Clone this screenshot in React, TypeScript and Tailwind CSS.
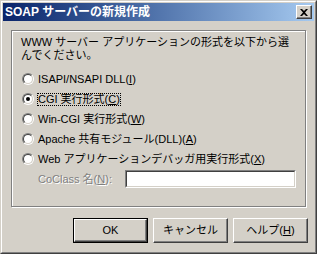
import type { ReactNode } from "react";

const font = { fontFamily: '"Liberation Sans", "Noto Sans CJK JP", sans-serif' };

function Radio({ checked }: { checked?: boolean }) {
  return (
    <div className="w-3 h-3 rounded-full border border-t-[#808080] border-l-[#808080] border-b-white border-r-white shrink-0">
      <div className="w-full h-full rounded-full border border-t-[#404040] border-l-[#404040] border-b-[#d4d0c8] border-r-[#d4d0c8] bg-white flex items-center justify-center">
        {checked && <div className="w-1 h-1 rounded-full bg-black" />}
      </div>
    </div>
  );
}

function Option({ checked, focused, children }: { checked?: boolean; focused?: boolean; children: ReactNode }) {
  return (
    <div className="h-5 flex items-center ml-[1px]">
      <Radio checked={checked} />
      <span
        className={
          focused
            ? "ml-[3px] px-[1px] h-[13px] leading-[11px] outline-1 outline-dotted outline-black -outline-offset-1 flex items-center"
            : "ml-[4px] leading-[13px]"
        }
      >
        {children}
      </span>
    </div>
  );
}

function Button({ children, isDefault }: { children: ReactNode; isDefault?: boolean }) {
  const face = (
    <div className="w-full h-full border border-t-white border-l-white border-r-[#404040] border-b-[#404040] shadow-[inset_-1px_-1px_0_#808080] flex items-center justify-center">
      {children}
    </div>
  );
  return isDefault ? (
    <div className="w-[75px] h-[25px] border border-black">{face}</div>
  ) : (
    <div className="w-[75px] h-[25px]">{face}</div>
  );
}

export default function App() {
  return (
    <div className="w-[317px] h-[254px] bg-[#d4d0c8] text-[11px] text-black" style={font}>
      <div className="w-full h-full border border-t-[#d4d0c8] border-l-[#d4d0c8] border-r-[#404040] border-b-[#404040]">
        <div className="w-full h-full border border-t-white border-l-white border-r-[#808080] border-b-[#808080] p-[1px] flex flex-col">
          {/* title bar */}
          <div className="h-[18px] bg-gradient-to-r from-[#0a246a] to-[#a6caf0] flex items-center justify-between pl-[2px] pr-[2px] shrink-0">
            <span className="text-white font-bold text-[12px] leading-none whitespace-nowrap">SOAP サーバーの新規作成</span>
            <div className="w-4 h-[14px] bg-[#d4d0c8] border border-t-white border-l-white border-r-[#404040] border-b-[#404040] shadow-[inset_-1px_-1px_0_#808080] flex items-center justify-center">
              <svg width="8" height="7" viewBox="0 0 8 7">
                <path d="M0 0h2l2 2 2-2h2L5 3.5 8 7H6L4 5 2 7H0l3-3.5z" fill="black" />
              </svg>
            </div>
          </div>

          {/* group box */}
          <div className="ml-[8px] mt-[9px] w-[295px] h-[177px] border border-[#808080] shadow-[1px_1px_0_white,inset_1px_1px_0_white] pt-[5px] pl-[9px]">
            <p className="leading-[13px] whitespace-nowrap">
              WWW サーバー アプリケーションの形式を以下から選
              <br />
              んでください。
            </p>
            <div className="mt-[7px] flex flex-col">
              <Option>
                ISAPI/NSAPI DLL(<u>I</u>)
              </Option>
              <Option checked focused>
                CGI 実行形式(<u>C</u>)
              </Option>
              <Option>
                Win-CGI 実行形式(<u>W</u>)
              </Option>
              <Option>
                Apache 共有モジュール(DLL)(<u>A</u>)
              </Option>
              <Option>
                Web アプリケーションデバッガ用実行形式(<u>X</u>)
              </Option>
              <div className="h-5 flex items-center ml-[17px]">
                <span className="text-[#808080] [text-shadow:1px_1px_0_white] w-[87px]">
                  CoClass 名(<u>N</u>):
                </span>
                <div className="w-[171px] h-[18px] border border-t-[#808080] border-l-[#808080] border-b-white border-r-white">
                  <div className="w-full h-full border border-t-[#404040] border-l-[#404040] border-b-[#d4d0c8] border-r-[#d4d0c8] bg-white" />
                </div>
              </div>
            </div>
          </div>

          {/* buttons */}
          <div className="mt-[11px] flex justify-end gap-[5px] pr-[6px]">
            <Button isDefault>OK</Button>
            <Button>キャンセル</Button>
            <Button>
              ヘルプ(<u>H</u>)
            </Button>
          </div>
        </div>
      </div>
    </div>
  );
}
